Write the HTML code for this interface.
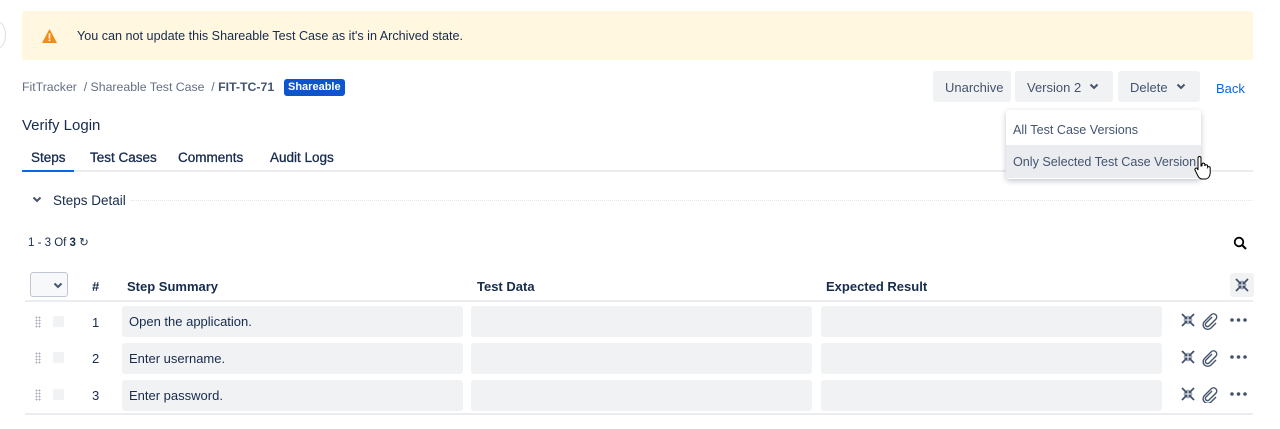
<!DOCTYPE html>
<html><head><style>
*{box-sizing:border-box;margin:0;padding:0}
body{width:1280px;height:429px;background:#fff;font-family:"Liberation Sans",sans-serif;font-size:13px;color:#172b4d;position:relative;overflow:hidden}
.a{position:absolute;white-space:nowrap}
.btn{position:absolute;top:71px;height:31px;background:#f1f2f4;border-radius:3px;color:#44546f;font-size:13px;line-height:33px;padding-left:12px}
.cell{position:absolute;height:31px;background:#f1f2f4;border-radius:3px;line-height:31px;padding-left:7px;font-size:13px}
.th{position:absolute;top:279px;font-weight:bold;font-size:13px}
.cb{position:absolute;left:53px;width:11px;height:11px;background:#f1f2f4;border-radius:2px}
.dr{position:absolute;left:35px;width:6px;height:12px;background-image:radial-gradient(#aab 0.8px,transparent 1px);background-size:3px 3px}
.tab{position:absolute;top:150px;font-size:13.5px;color:#172b4d;-webkit-text-stroke:0.3px #172b4d}
</style></head><body>
<div class="a" style="left:-8px;top:22px;width:14px;height:26px;border:1px solid #ddd;border-radius:50%"></div>
<div class="a" style="left:22px;top:11px;width:1231px;height:49px;background:#fff7e0;border-radius:3px"></div>
<svg class="a" style="left:41px;top:28px" width="17" height="16" viewBox="0 0 17 16"><path d="M8.5 1L16 15H1Z" fill="#f18d13"/><rect x="7.7" y="5.5" width="1.6" height="5" fill="#fff"/><rect x="7.7" y="11.5" width="1.6" height="1.6" fill="#fff"/></svg>
<div class="a" style="left:77px;top:29px;font-size:12.6px;color:#172b4d">You can not update this Shareable Test Case as it's in Archived state.</div>
<div class="a" style="left:22px;top:80px;font-size:12.3px;color:#626f86">FitTracker&nbsp; / Shareable Test Case&nbsp; / <b style="color:#44546f">FIT-TC-71</b></div>
<div class="a" style="left:284px;top:79px;height:17px;padding:0 4px;background:#0c55cf;color:#fff;font-size:11px;font-weight:bold;line-height:17px;border-radius:3px">Shareable</div>
<div class="btn" style="left:933px;width:78px">Unarchive</div>
<div class="btn" style="left:1015px;width:98px">Version 2</div>
<div class="btn" style="left:1118px;width:82px">Delete</div>
<svg class="a" style="left:1089px;top:83px" width="10" height="7"><path d="M1.5 1.5L5 5 8.5 1.5" stroke="#44546f" stroke-width="2" fill="none"/></svg>
<svg class="a" style="left:1176px;top:83px" width="10" height="7"><path d="M1.5 1.5L5 5 8.5 1.5" stroke="#44546f" stroke-width="2" fill="none"/></svg>
<div class="a" style="left:1216px;top:81px;color:#0c66e4;font-size:13px">Back</div>
<div class="a" style="left:22px;top:117px;font-size:15px">Verify Login</div>
<div class="tab" style="left:31px">Steps</div>
<div class="tab" style="left:90px">Test Cases</div>
<div class="tab" style="left:178px">Comments</div>
<div class="tab" style="left:270px">Audit Logs</div>
<div class="a" style="left:22px;top:170px;width:1231px;height:2px;background:#ebecf0"></div>
<div class="a" style="left:22px;top:170px;width:52px;height:2px;background:#0c66e4"></div>
<svg class="a" style="left:32px;top:196px" width="10" height="7"><path d="M1.5 1.5L5 5 8.5 1.5" stroke="#44546f" stroke-width="2" fill="none"/></svg>
<div class="a" style="left:53px;top:193px;font-size:13.5px;color:#172b4d">Steps Detail</div>
<div class="a" style="left:131px;top:200px;width:1122px;border-top:1px dotted #e4e6ea"></div>
<div class="a" style="left:28px;top:235px;font-size:11.5px">1 - 3 Of <b>3</b> &#x21bb;</div>
<svg class="a" style="left:1233px;top:236px" width="14" height="14"><circle cx="6" cy="6" r="4.3" stroke="#000" stroke-width="1.8" fill="none"/><path d="M9 9L13 13" stroke="#000" stroke-width="2"/></svg>
<div class="a" style="left:30px;top:272px;width:38px;height:25px;border:1px solid #c1c7d0;border-radius:3px;background:#f7f8f9"></div>
<svg class="a" style="left:53px;top:282px" width="10" height="7"><path d="M1.5 1.5L5 5 8.5 1.5" stroke="#44546f" stroke-width="2" fill="none"/></svg>
<div class="th" style="left:92px">#</div>
<div class="th" style="left:127px">Step Summary</div>
<div class="th" style="left:477px">Test Data</div>
<div class="th" style="left:826px">Expected Result</div>
<div class="a" style="left:1230px;top:273px;width:24px;height:24px;background:#f1f2f4;border-radius:3px"></div>
<svg class="a" style="left:1235px;top:278px" width="14" height="14" viewBox="0 0 14 14"><g stroke="#44546f" stroke-width="1.8"><path d="M1 1L5.5 5.5M13 1L8.5 5.5M1 13L5.5 8.5M13 13L8.5 8.5"/></g><g fill="#44546f"><path d="M6.5 6.5H2.5L6.5 2.5zM7.5 6.5H11.5L7.5 2.5zM6.5 7.5H2.5L6.5 11.5zM7.5 7.5H11.5L7.5 11.5z"/></g></svg>
<div class="a" style="left:25px;top:300px;width:1228px;height:2px;background:#ebecf0"></div>
<div class="a" style="left:25px;top:413px;width:1228px;height:2px;background:#ebecf0"></div>

<div class="dr" style="top:316px"></div><div class="cb" style="top:316px"></div><div class="a" style="left:92px;top:315px">1</div>
<div class="cell" style="left:122px;top:306px;width:341px">Open the application.</div>
<div class="cell" style="left:471px;top:306px;width:341px"></div>
<div class="cell" style="left:821px;top:306px;width:341px"></div>
<div class="dr" style="top:352px"></div><div class="cb" style="top:352px"></div><div class="a" style="left:92px;top:351px">2</div>
<div class="cell" style="left:122px;top:343px;width:341px">Enter username.</div>
<div class="cell" style="left:471px;top:343px;width:341px"></div>
<div class="cell" style="left:821px;top:343px;width:341px"></div>
<div class="dr" style="top:389px"></div><div class="cb" style="top:389px"></div><div class="a" style="left:92px;top:388px">3</div>
<div class="cell" style="left:122px;top:380px;width:341px">Enter password.</div>
<div class="cell" style="left:471px;top:380px;width:341px"></div>
<div class="cell" style="left:821px;top:380px;width:341px"></div>

<svg class="a" style="left:1180px;top:313px" width="70" height="90">
<defs><g id="r"><g transform="translate(1,0)"><g stroke="#44546f" stroke-width="1.8"><path d="M1 1L5.5 5.5M13 1L8.5 5.5M1 13L5.5 8.5M13 13L8.5 8.5"/></g><g fill="#44546f"><path d="M6.5 6.5H2.5L6.5 2.5zM7.5 6.5H11.5L7.5 2.5zM6.5 7.5H2.5L6.5 11.5zM7.5 7.5H11.5L7.5 11.5z"/></g></g><path d="M36 5l-6 6a2 2 0 0 0 3 3l7-7a3.2 3.2 0 0 0-4.5-4.5l-7 7a4.5 4.5 0 0 0 6.5 6.5l5-5" stroke="#44546f" stroke-width="1.4" fill="none" transform="translate(-4,-1)"/><circle cx="52" cy="7" r="1.8" fill="#44546f"/><circle cx="58.5" cy="7" r="1.8" fill="#44546f"/><circle cx="65" cy="7" r="1.8" fill="#44546f"/></g></defs>
<use href="#r"/><use href="#r" y="37"/><use href="#r" y="74"/>
</svg>

<div class="a" style="left:1006px;top:110px;width:195px;height:69px;background:#fff;border-radius:3px;box-shadow:0 2px 6px rgba(9,30,66,.25)"></div>
<div class="a" style="left:1006px;top:145px;width:195px;height:33px;background:#ebecf0"></div>
<div class="a" style="left:1013px;top:123px;color:#44546f;font-size:12.6px">All Test Case Versions</div>
<div class="a" style="left:1013px;top:155px;color:#44546f;font-size:12.6px">Only Selected Test Case Version</div>
<svg class="a" style="left:1193px;top:156px" width="18" height="26" viewBox="0 0 18 26"><path d="M5 2a1.5 1.5 0 0 1 3 0v8l1-.2V8.5a1.4 1.4 0 0 1 2.8 0V10a1.4 1.4 0 0 1 2.8.3v1a1.4 1.4 0 0 1 2.6.7v5c0 3-2 6-5 6H9c-2 0-3-1-4-3L2 14a1.4 1.4 0 0 1 2.3-1.5L5 14z" fill="#fff" stroke="#000" stroke-width="1"/></svg>
</body></html>
